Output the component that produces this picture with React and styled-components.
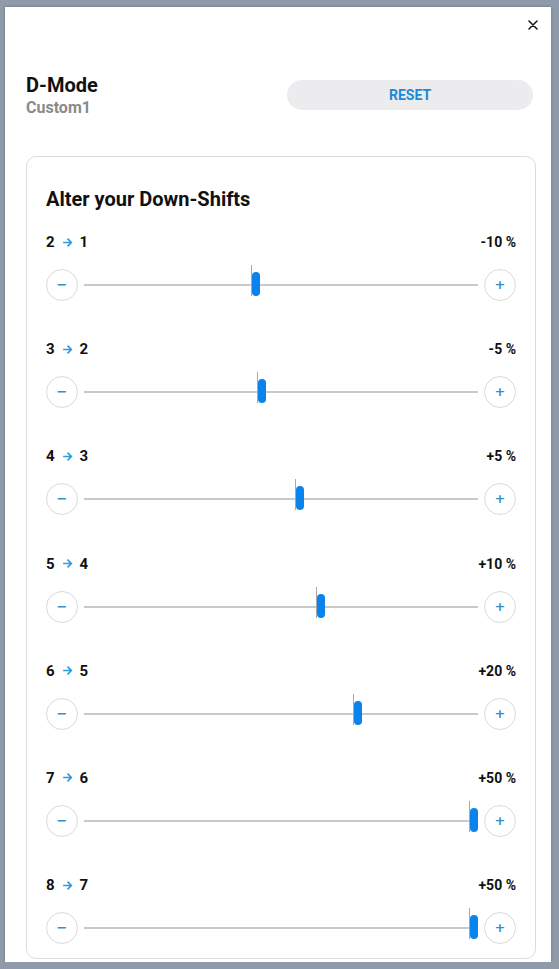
import React, { useState } from 'react'
import styled, { createGlobalStyle } from 'styled-components'

const GlobalStyle = createGlobalStyle`
  html, body {
    margin: 0;
    padding: 0;
    background: #8f9bab;
    font-family: Roboto, "Liberation Sans", sans-serif;
  }
`

const shifts = [
  { from: 2, to: 1, value: '-10 %', pos: 0.424 },
  { from: 3, to: 2, value: '-5 %', pos: 0.44 },
  { from: 4, to: 3, value: '+5 %', pos: 0.536 },
  { from: 5, to: 4, value: '+10 %', pos: 0.589 },
  { from: 6, to: 5, value: '+20 %', pos: 0.683 },
  { from: 7, to: 6, value: '+50 %', pos: 0.978 },
  { from: 8, to: 7, value: '+50 %', pos: 0.978 },
]

const App = () => {
  const [rows, setRows] = useState(shifts)

  const step = (i, d) => {
    setRows((r) =>
      r.map((row, j) =>
        j === i ? { ...row, pos: Math.min(0.978, Math.max(0, row.pos + d * 0.02)) } : row
      )
    )
  }

  return (
    <>
      <GlobalStyle />
      <Dialog>
        <Close aria-label="close">
          <svg width="10" height="10" viewBox="0 0 10 10">
            <path d="M1 1L9 9M9 1L1 9" stroke="#111" strokeWidth="1.5" strokeLinecap="round" />
          </svg>
        </Close>
        <Header>
          <TitleBlock>
            <Mode>D-Mode</Mode>
            <Preset>Custom1</Preset>
          </TitleBlock>
          <ResetButton>RESET</ResetButton>
        </Header>
        <Card>
          <CardTitle>Alter your Down-Shifts</CardTitle>
          {rows.map((row, i) => (
            <ShiftRow key={row.from}>
              <LabelRow>
                <Gear>
                  {row.from}
                  <Arrow width="11" height="11" viewBox="0 0 10 10">
                    <path d="M1 5H8.5M5 1.5L8.5 5L5 8.5" stroke="#2e9be0" strokeWidth="1.5" fill="none" />
                  </Arrow>
                  {row.to}
                </Gear>
                <Value>{row.value}</Value>
              </LabelRow>
              <SliderRow>
                <RoundButton onClick={() => step(i, -1)}>−</RoundButton>
                <Track>
                  <Handle style={{ left: `${row.pos * 100}%` }}>
                    <Tick />
                    <Thumb />
                  </Handle>
                </Track>
                <RoundButton onClick={() => step(i, 1)}>+</RoundButton>
              </SliderRow>
            </ShiftRow>
          ))}
        </Card>
      </Dialog>
    </>
  )
}

export default App

const Dialog = styled.div`
  position: relative;
  box-sizing: border-box;
  width: 546px;
  height: 955px;
  margin: 7px 0 0 5px;
  padding: 66px 15px 0 21px;
  background: #fff;
  box-shadow: 0 0 3px rgba(0, 0, 0, 0.25);
`

const Close = styled.button`
  position: absolute;
  top: 11px;
  right: 11px;
  width: 14px;
  height: 14px;
  padding: 0;
  border: none;
  background: none;
  display: flex;
  align-items: center;
  justify-content: center;
  cursor: pointer;
`

const Header = styled.div`
  display: flex;
  align-items: flex-start;
  justify-content: space-between;
  padding-right: 3px;
`

const TitleBlock = styled.div`
  display: flex;
  flex-direction: column;
`

const Mode = styled.span`
  font-size: 20px;
  line-height: 24px;
  font-weight: 700;
  color: #111;
`

const Preset = styled.span`
  font-size: 16px;
  line-height: 21px;
  font-weight: 700;
  color: #8a8a8a;
`

const ResetButton = styled.button`
  width: 246px;
  height: 30px;
  margin-top: 7px;
  border: none;
  border-radius: 15px;
  background: #ececee;
  color: #1a8ad8;
  font-family: Roboto, "Liberation Sans", sans-serif;
  font-size: 14px;
  font-weight: 700;
  cursor: pointer;
`

const Card = styled.div`
  box-sizing: border-box;
  width: 510px;
  margin-top: 38px;
  padding: 29px 19px 0 19px;
  border: 1px solid #dcdcdc;
  border-radius: 10px;
  height: 803px;
`

const CardTitle = styled.h2`
  margin: 0 0 20px;
  font-size: 20px;
  line-height: 26px;
  font-weight: 700;
  color: #111;
`

const ShiftRow = styled.div`
  display: flex;
  flex-direction: column;
  gap: 17px;
  margin-bottom: 38.2px;
`

const LabelRow = styled.div`
  display: flex;
  justify-content: space-between;
  align-items: center;
  height: 20px;
`

const Gear = styled.span`
  display: flex;
  align-items: center;
  gap: 7px;
  font-size: 15px;
  font-weight: 700;
  color: #111;
`

const Arrow = styled.svg`
  display: block;
`

const Value = styled.span`
  font-size: 14px;
  font-weight: 700;
  color: #111;
`

const SliderRow = styled.div`
  display: flex;
  align-items: center;
  gap: 6px;
  height: 32px;
`

const RoundButton = styled.button`
  flex: none;
  width: 32px;
  height: 32px;
  padding: 0 0 1px;
  border: 1px solid #dadada;
  border-radius: 50%;
  background: #fff;
  color: #3b8cc4;
  font-family: "DejaVu Sans", sans-serif;
  font-size: 13px;
  font-weight: 700;
  line-height: 1;
  cursor: pointer;
`

const Track = styled.div`
  position: relative;
  flex: 1;
  height: 2px;
  background: #c9c9c9;
`

const Handle = styled.div`
  position: absolute;
  top: -19px;
  width: 10px;
  height: 32px;
`

const Tick = styled.div`
  position: absolute;
  left: 0;
  top: 0;
  width: 1px;
  height: 31px;
  background: #a8a8a8;
`

const Thumb = styled.div`
  position: absolute;
  left: 1px;
  top: 7px;
  width: 8px;
  height: 24px;
  border-radius: 4px;
  background: #0a84ec;
`
